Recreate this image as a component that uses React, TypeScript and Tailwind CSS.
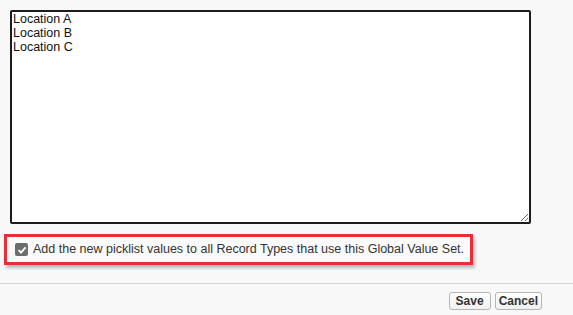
import React from 'react';

export default function App() {
  return (
    <div className="w-[573px] h-[315px] bg-[#f8f8f8] overflow-hidden flex flex-col font-['Liberation_Sans',Arial,sans-serif]">
      {/* Values */}
      <div className="pl-[10px] pt-[10px]">
        <textarea
          readOnly
          defaultValue={'Location A\nLocation B\nLocation C'}
          className="block w-[521px] h-[214px] border-2 border-[#1c1c1c] rounded-[2px] bg-white px-[1px] py-0 text-[12.5px] leading-[14px] text-[#111] outline-none resize"
        />
      </div>

      {/* Record type option */}
      <div className="pl-[4px] pt-[10px]">
        <div className="w-[469px] h-[31px] border-[3px] border-[#ee2c35] bg-[#fafafa] shadow-[2px_3px_3px_rgba(0,0,0,0.25)] flex items-center pl-[8px] gap-[5px]">
          <span className="shrink-0 w-[13px] h-[13px] rounded-[2px] bg-[#6d6d6d] flex items-center justify-center">
            <svg width="10" height="10" viewBox="0 0 10 10">
              <path d="M1.5 5.2 L4 7.6 L8.6 2.4" fill="none" stroke="#fff" strokeWidth="1.8" />
            </svg>
          </span>
          <span className="whitespace-nowrap text-[12.5px] text-[#333] leading-none">
            Add the new picklist values to all Record Types that use this Global Value Set.
          </span>
        </div>
      </div>

      {/* Footer */}
      <div className="mt-[18px] border-t border-[#d4d4d4] shadow-[0_1px_0_#fff_inset]" />
      <div className="flex justify-end gap-[4px] pr-[31px] pt-[8px]">
        <button className="h-[18px] px-[6px] border border-[#b5b5b5] rounded-[3px] bg-gradient-to-b from-white to-[#f0f0f0] text-[12px] font-bold text-[#333] leading-none">
          Save
        </button>
        <button className="h-[18px] px-[3px] border border-[#b5b5b5] rounded-[3px] bg-gradient-to-b from-white to-[#f0f0f0] text-[12px] font-bold text-[#333] leading-none">
          Cancel
        </button>
      </div>
    </div>
  );
}
